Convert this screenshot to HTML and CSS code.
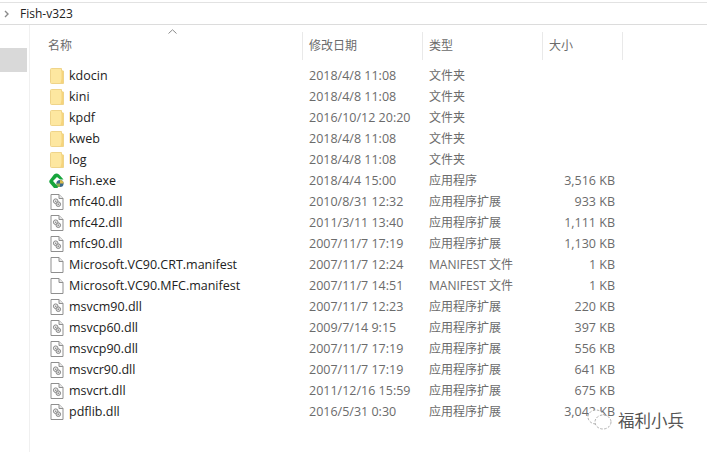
FILE: index.html
```html
<!DOCTYPE html>
<html lang="zh-CN">
<head>
    <meta charset="UTF-8">
    <title>Fish-v323</title>
    <link rel="stylesheet" href="styles.css">
</head>
<body>
    <svg class="defs" width="0" height="0">
        <symbol id="folder" viewBox="0 0 14 16">
            <path d="M.5 1.5Q.5 .5 1.5 .5H11.5V3H13.5V15.5H1.5Q.5 15.5 .5 14.5Z" fill="#fde7a0" stroke="#efd48a"/>
            <path d="M11.5 1V11L10.5 15H13V3.5Z" fill="#f6d47c"/>
        </symbol>
        <symbol id="dll" viewBox="0 0 13 16">
            <path d="M.5 .5H8.5L12.5 4.5V15.5H.5Z" fill="#fff" stroke="#8f8f8f"/>
            <path d="M8.5 .5V4.5H12.5" fill="#e6e6e6" stroke="#8f8f8f"/>
            <circle cx="5.2" cy="7.2" r="2.3" fill="#eee" stroke="#8a8a8a"/>
            <circle cx="7.8" cy="10.2" r="2.3" fill="#ddd" stroke="#8a8a8a"/>
            <circle cx="5.2" cy="7.2" r=".8" fill="#888"/>
            <circle cx="7.8" cy="10.2" r=".8" fill="#888"/>
        </symbol>
        <symbol id="page" viewBox="0 0 13 16">
            <path d="M.5 .5H8.5L12.5 4.5V15.5H.5Z" fill="#fff" stroke="#8f8f8f"/>
            <path d="M8.5 .5V4.5H12.5" fill="#e6e6e6" stroke="#8f8f8f"/>
        </symbol>
        <symbol id="exe" viewBox="0 0 16 16">
            <path d="M5 1.5Q7.5 -.5 10 1.5L14.5 6.5H11L8 4L4 8L7.5 12H10L8.5 15H5L.8 10Q-.3 8.5 .8 7Z" fill="#17a53c"/>
            <circle cx="11" cy="10.5" r="3.6" fill="#3b6a8c"/>
            <path d="M11 6.9A3.6 3.6 0 0 1 14.6 10.5H11Z" fill="#d8b84a"/>
            <path d="M7.4 10.5H11V14.1A3.6 3.6 0 0 1 7.4 10.5Z" fill="#8fb24d"/>
        </symbol>
    </svg>

    <div class="path-bar">
        <svg class="crumb-arrow" width="5" height="8" viewBox="0 0 5 8"><path d="M1 1L4 4L1 7" fill="none" stroke="#8a8a8a" stroke-width="1.4"/></svg>
        <span>Fish-v323</span>
    </div>

    <div class="explorer">
        <aside class="sidebar">
            <div class="sidebar-selected"></div>
        </aside>
        <main class="files">
            <div class="sort-arrow-row">
                <svg width="9" height="5" viewBox="0 0 9 5"><path d="M.5 4.5L4.5 .8L8.5 4.5" fill="none" stroke="#8a8a8a"/></svg>
            </div>
            <div class="head">
                <div class="col-name">名称</div>
                <div class="col-date">修改日期</div>
                <div class="col-type">类型</div>
                <div class="col-size">大小</div>
            </div>
            <ul class="rows">
                <li><span class="col-name"><svg class="icon"><use href="#folder"/></svg>kdocin</span><span class="col-date">2018/4/8 11:08</span><span class="col-type">文件夹</span><span class="col-size"></span></li>
                <li><span class="col-name"><svg class="icon"><use href="#folder"/></svg>kini</span><span class="col-date">2018/4/8 11:08</span><span class="col-type">文件夹</span><span class="col-size"></span></li>
                <li><span class="col-name"><svg class="icon"><use href="#folder"/></svg>kpdf</span><span class="col-date">2016/10/12 20:20</span><span class="col-type">文件夹</span><span class="col-size"></span></li>
                <li><span class="col-name"><svg class="icon"><use href="#folder"/></svg>kweb</span><span class="col-date">2018/4/8 11:08</span><span class="col-type">文件夹</span><span class="col-size"></span></li>
                <li><span class="col-name"><svg class="icon"><use href="#folder"/></svg>log</span><span class="col-date">2018/4/8 11:08</span><span class="col-type">文件夹</span><span class="col-size"></span></li>
                <li><span class="col-name"><svg class="icon icon-exe"><use href="#exe"/></svg>Fish.exe</span><span class="col-date">2018/4/4 15:00</span><span class="col-type">应用程序</span><span class="col-size">3,516 KB</span></li>
                <li><span class="col-name"><svg class="icon"><use href="#dll"/></svg>mfc40.dll</span><span class="col-date">2010/8/31 12:32</span><span class="col-type">应用程序扩展</span><span class="col-size">933 KB</span></li>
                <li><span class="col-name"><svg class="icon"><use href="#dll"/></svg>mfc42.dll</span><span class="col-date">2011/3/11 13:40</span><span class="col-type">应用程序扩展</span><span class="col-size">1,111 KB</span></li>
                <li><span class="col-name"><svg class="icon"><use href="#dll"/></svg>mfc90.dll</span><span class="col-date">2007/11/7 17:19</span><span class="col-type">应用程序扩展</span><span class="col-size">1,130 KB</span></li>
                <li><span class="col-name"><svg class="icon"><use href="#page"/></svg>Microsoft.VC90.CRT.manifest</span><span class="col-date">2007/11/7 12:24</span><span class="col-type">MANIFEST 文件</span><span class="col-size">1 KB</span></li>
                <li><span class="col-name"><svg class="icon"><use href="#page"/></svg>Microsoft.VC90.MFC.manifest</span><span class="col-date">2007/11/7 14:51</span><span class="col-type">MANIFEST 文件</span><span class="col-size">1 KB</span></li>
                <li><span class="col-name"><svg class="icon"><use href="#dll"/></svg>msvcm90.dll</span><span class="col-date">2007/11/7 12:23</span><span class="col-type">应用程序扩展</span><span class="col-size">220 KB</span></li>
                <li><span class="col-name"><svg class="icon"><use href="#dll"/></svg>msvcp60.dll</span><span class="col-date">2009/7/14 9:15</span><span class="col-type">应用程序扩展</span><span class="col-size">397 KB</span></li>
                <li><span class="col-name"><svg class="icon"><use href="#dll"/></svg>msvcp90.dll</span><span class="col-date">2007/11/7 17:19</span><span class="col-type">应用程序扩展</span><span class="col-size">556 KB</span></li>
                <li><span class="col-name"><svg class="icon"><use href="#dll"/></svg>msvcr90.dll</span><span class="col-date">2007/11/7 17:19</span><span class="col-type">应用程序扩展</span><span class="col-size">641 KB</span></li>
                <li><span class="col-name"><svg class="icon"><use href="#dll"/></svg>msvcrt.dll</span><span class="col-date">2011/12/16 15:59</span><span class="col-type">应用程序扩展</span><span class="col-size">675 KB</span></li>
                <li><span class="col-name"><svg class="icon"><use href="#dll"/></svg>pdflib.dll</span><span class="col-date">2016/5/31 0:30</span><span class="col-type">应用程序扩展</span><span class="col-size">3,042 KB</span></li>
            </ul>
        </main>
    </div>

    <div class="watermark">
        <svg width="30" height="24" viewBox="0 0 30 24">
            <g fill="#fff" stroke="#9a9a9a" stroke-width=".8" stroke-dasharray="2.5 1.5">
                <ellipse cx="11" cy="9" rx="8" ry="7"/>
                <ellipse cx="18" cy="14" rx="8" ry="7"/>
            </g>
        </svg>
        <span>福利小兵</span>
    </div>
</body>
</html>
```

FILE: styles.css
```css
html, body {
	height: 100%;
}

body {
	margin: 0;
	background: #fff;
	font-family: "Open Sans", "Noto Sans CJK SC", sans-serif;
	font-size: 12.5px;
	color: #1f1f1f;
	overflow: hidden;
	position: relative;
}

.defs {
	position: absolute;
}

.path-bar {
	display: flex;
	align-items: center;
	gap: 11px;
	height: 21px;
	margin-top: 2px;
	padding-left: 4px;
	border-top: 1px solid #e2e2e2;
	border-bottom: 1px solid #dcdcdc;
	font-size: 12px;
	color: #222;
}

.explorer {
	display: flex;
	height: 427px;
}

.sidebar {
	width: 29px;
	border-right: 1px solid #f0f0f0;
	padding-top: 23px;
}

.sidebar-selected {
	width: 27px;
	height: 24px;
	background: #d9d9d9;
}

.files {
	flex: 1;
}

.sort-arrow-row {
	height: 7px;
	padding-left: 138px;
	line-height: 0;
	padding-top: 4px;
	box-sizing: border-box;
}

.head {
	display: flex;
	height: 28px;
	color: #6b6b6b;
	font-size: 12px;
}

.head > div {
	padding-top: 4px;
	box-sizing: border-box;
	border-right: 1px solid #e9e9e9;
}

.col-name {
	width: 273px;
	display: flex;
	align-items: center;
}

.head .col-name {
	padding-left: 18px;
	align-items: flex-start;
}

.col-date {
	width: 120px;
	padding-left: 6px;
	box-sizing: border-box;
	color: #6b6b6b;
}

.col-type {
	width: 120px;
	padding-left: 6px;
	box-sizing: border-box;
	color: #6b6b6b;
	font-size: 12px;
}

.col-size {
	width: 80px;
	padding-left: 6px;
	box-sizing: border-box;
	color: #6b6b6b;
}

.rows {
	list-style: none;
	margin: 0;
	padding: 5px 0 0 0;
}

.rows li {
	display: flex;
	align-items: center;
	height: 21px;
	line-height: 21px;
	white-space: nowrap;
}

.rows .col-name {
	padding-left: 20px;
	box-sizing: border-box;
	color: #222;
}

.rows .col-size {
	text-align: right;
	padding-right: 8px;
	padding-left: 0;
}

.icon {
	width: 14px;
	height: 16px;
	margin-right: 5px;
	flex: none;
}

.icon-exe {
	width: 16px;
	margin-left: -1px;
	margin-right: 4px;
}

.watermark {
	position: absolute;
	left: 585px;
	top: 408px;
	display: flex;
	align-items: center;
	gap: 3px;
	font-size: 16.5px;
	color: #555;
}
```
